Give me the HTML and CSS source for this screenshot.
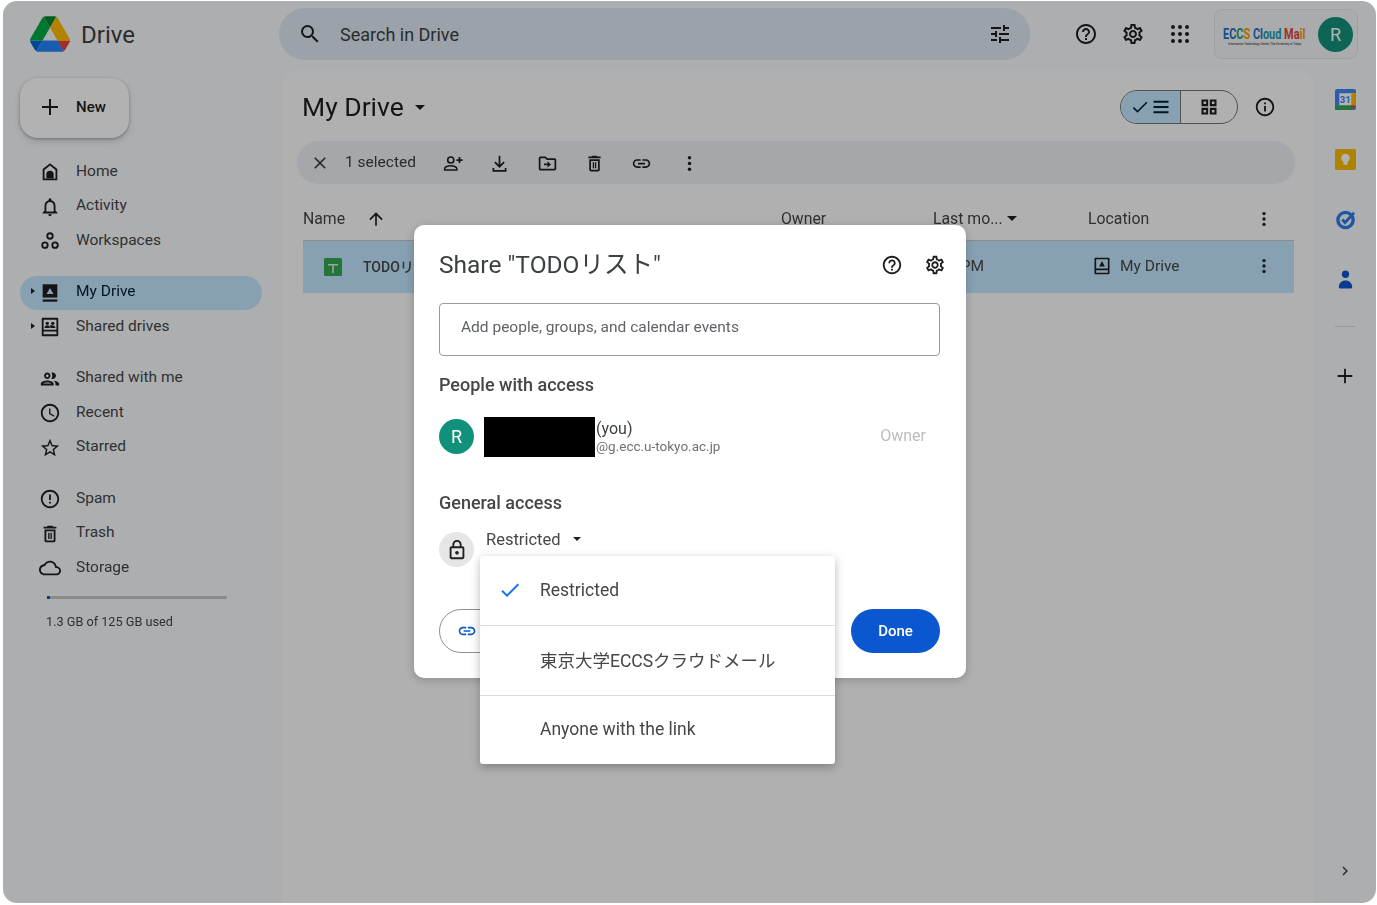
FILE: index.html
```html
<!DOCTYPE html>
<html lang="en">
<head>
  <meta charset="UTF-8" />
  <title>My Drive - Google Drive</title>
  <link rel="stylesheet" href="styles.css">
</head>
<body>
  <svg class="sprite" xmlns="http://www.w3.org/2000/svg">
    <symbol id="i-search" viewBox="0 0 24 24"><path d="M15.5 14h-.79l-.28-.27A6.471 6.471 0 0 0 16 9.5 6.5 6.5 0 1 0 9.5 16c1.61 0 3.09-.59 4.23-1.57l.27.28v.79l5 4.99L20.49 19l-4.99-5zm-6 0C7.01 14 5 11.99 5 9.5S7.01 5 9.5 5 14 7.01 14 9.5 11.99 14 9.5 14z"/></symbol>
    <symbol id="i-tune" viewBox="0 0 24 24"><path d="M3 17v2h6v-2H3zM3 5v2h10V5H3zm10 16v-2h8v-2h-8v-2h-2v6h2zM7 9v2H3v2h4v2h2V9H7zm14 4v-2H11v2h10zm-6-4h2V7h4V5h-4V3h-2v6z"/></symbol>
    <symbol id="i-help" viewBox="0 0 24 24"><path d="M11 18h2v-2h-2v2zm1-16C6.48 2 2 6.48 2 12s4.48 10 10 10 10-4.48 10-10S17.52 2 12 2zm0 18c-4.41 0-8-3.59-8-8s3.59-8 8-8 8 3.59 8 8-3.59 8-8 8zm0-14c-2.21 0-4 1.79-4 4h2c0-1.1.9-2 2-2s2 .9 2 2c0 2-3 1.75-3 5h2c0-2.25 3-2.5 3-5 0-2.21-1.79-4-4-4z"/></symbol>
    <symbol id="i-settings" viewBox="0 0 24 24"><path d="M19.43 12.98c.04-.32.07-.64.07-.98 0-.34-.03-.66-.07-.98l2.11-1.65c.19-.15.24-.42.12-.64l-2-3.46c-.09-.16-.26-.25-.44-.25-.06 0-.12.01-.17.03l-2.49 1c-.52-.4-1.08-.73-1.69-.98l-.38-2.65C14.46 2.18 14.25 2 14 2h-4c-.25 0-.46.18-.49.42l-.38 2.65c-.61.25-1.17.59-1.69.98l-2.49-1c-.06-.02-.12-.03-.18-.03-.17 0-.34.09-.43.25l-2 3.46c-.13.22-.07.49.12.64l2.11 1.65c-.04.32-.07.65-.07.98 0 .33.03.66.07.98l-2.11 1.65c-.19.15-.24.42-.12.64l2 3.46c.09.16.26.25.44.25.06 0 .12-.01.17-.03l2.49-1c.52.4 1.08.73 1.69.98l.38 2.65c.03.24.24.42.49.42h4c.25 0 .46-.18.49-.42l.38-2.65c.61-.25 1.17-.59 1.69-.98l2.49 1c.06.02.12.03.18.03.17 0 .34-.09.43-.25l2-3.46c.12-.22.07-.49-.12-.64l-2.11-1.65zm-1.98-1.71c.04.31.05.52.05.73 0 .21-.02.43-.05.73l-.14 1.13.89.7 1.08.84-.7 1.21-1.27-.51-1.04-.42-.9.68c-.43.32-.84.56-1.25.73l-1.06.43-.16 1.13-.2 1.35h-1.4l-.19-1.35-.16-1.13-1.06-.43c-.43-.18-.83-.41-1.23-.71l-.91-.7-1.06.43-1.27.51-.7-1.21 1.08-.84.89-.7-.14-1.13c-.03-.31-.05-.54-.05-.74s.02-.43.05-.73l.14-1.13-.89-.7-1.08-.84.7-1.21 1.27.51 1.04.42.9-.68c.43-.32.84-.56 1.25-.73l1.06-.43.16-1.13.2-1.35h1.39l.19 1.35.16 1.13 1.06.43c.43.18.83.41 1.23.71l.91.7 1.06-.43 1.27-.51.7 1.21-1.07.85-.89.7.14 1.13zM12 8c-2.21 0-4 1.79-4 4s1.79 4 4 4 4-1.79 4-4-1.79-4-4-4zm0 6c-1.1 0-2-.9-2-2s.9-2 2-2 2 .9 2 2-.9 2-2 2z"/></symbol>
    <symbol id="i-apps" viewBox="0 0 24 24"><circle cx="5" cy="5" r="2"/><circle cx="12" cy="5" r="2"/><circle cx="19" cy="5" r="2"/><circle cx="5" cy="12" r="2"/><circle cx="12" cy="12" r="2"/><circle cx="19" cy="12" r="2"/><circle cx="5" cy="19" r="2"/><circle cx="12" cy="19" r="2"/><circle cx="19" cy="19" r="2"/></symbol>
    <symbol id="i-plus" viewBox="0 0 24 24"><path d="M20 13h-7v7h-2v-7H4v-2h7V4h2v7h7z"/></symbol>
    <symbol id="i-home" viewBox="0 0 24 24"><path d="M12 2.5 4 8.7V21h16V8.7zM18 19H6V9.7l6-4.7 6 4.7z"/><path d="M8 19v-4.500a4 4 0 0 1 8 0V19z"/></symbol>
    <symbol id="i-bell" viewBox="0 0 24 24"><path d="M12 22c1.100 0 2-.9 2-2h-4c0 1.100.9 2 2 2zm6-6v-5c0-3.070-1.630-5.640-4.500-6.320V4c0-.83-.67-1.500-1.500-1.500s-1.500.67-1.500 1.500v.68C7.640 5.360 6 7.920 6 11v5l-2 2v1h16v-1l-2-2zm-2 1H8v-6c0-2.480 1.510-4.500 4-4.500s4 2.020 4 4.500v6z"/></symbol>
    <symbol id="i-workspaces" viewBox="0 0 24 24"><g fill="none" stroke="currentColor" stroke-width="2"><circle cx="12" cy="6.500" r="3"/><circle cx="6.500" cy="16.500" r="3"/><circle cx="17.500" cy="16.500" r="3"/></g></symbol>
    <symbol id="i-mydrive" viewBox="0 0 24 24"><path d="M4 2.500h16v14.500H4z"/><path d="M4 19h16v2.500H4z"/><path fill="#c2e7ff" d="M12 6.500 15.800 13H8.200z"/></symbol>
    <symbol id="i-drive-outline" viewBox="0 0 24 24"><path d="M4 2h16a1 1 0 0 1 1 1v18a1 1 0 0 1-1 1H4a1 1 0 0 1-1-1V3a1 1 0 0 1 1-1zm1 2v11h14V4zm0 13v3h14v-3z"/><path d="M12 6 15.500 12.500h-7z"/></symbol>
    <symbol id="i-shared" viewBox="0 0 24 24"><path d="M4 2h16a1 1 0 0 1 1 1v18a1 1 0 0 1-1 1H4a1 1 0 0 1-1-1V3a1 1 0 0 1 1-1zm1 2v11h14V4zm0 13v3h14v-3z"/><circle cx="9" cy="8" r="1.800"/><circle cx="15" cy="8" r="1.800"/><path d="M6 13c0-2 1.500-3 3-3s3 1 3 3zm6.500 0c0-1-.3-2-1-2.600.9-.5 1.800-.4 2.500-.4 1.800 0 4 1 4 3z"/></symbol>
    <symbol id="i-people" viewBox="0 0 24 24"><path d="M9 13.750c-2.340 0-7 1.170-7 3.500V19h14v-1.750c0-2.330-4.660-3.500-7-3.500zM4.340 17c.84-.58 2.870-1.250 4.660-1.250s3.820.67 4.660 1.250H4.340zM9 12c1.930 0 3.500-1.570 3.500-3.500S10.930 5 9 5 5.500 6.570 5.500 8.500 7.070 12 9 12zm0-5c.83 0 1.500.67 1.500 1.500S9.830 10 9 10s-1.500-.67-1.500-1.500S8.170 7 9 7zm7.040 6.810c1.160.84 1.960 1.960 1.960 3.440V19h4v-1.750c0-2.020-3.500-3.170-5.960-3.440zM15 12c1.930 0 3.500-1.570 3.500-3.500S16.930 5 15 5c-.54 0-1.040.13-1.500.35.630.89 1 1.980 1 3.150s-.37 2.260-1 3.150c.46.220.96.350 1.500.350z"/></symbol>
    <symbol id="i-clock" viewBox="0 0 24 24"><path d="M11.990 2C6.470 2 2 6.480 2 12s4.470 10 9.990 10C17.520 22 22 17.520 22 12S17.520 2 11.990 2zM12 20c-4.420 0-8-3.580-8-8s3.580-8 8-8 8 3.580 8 8-3.580 8-8 8zm.5-13H11v6l5.250 3.150.75-1.230-4.500-2.670z"/></symbol>
    <symbol id="i-star" viewBox="0 0 24 24"><path d="M22 9.240l-7.190-.62L12 2 9.190 8.630 2 9.240l5.460 4.730L5.820 21 12 17.270 18.180 21l-1.630-7.030L22 9.240zM12 15.400l-3.760 2.270 1-4.280-3.320-2.880 4.380-.38L12 6.100l1.710 4.040 4.380.38-3.320 2.880 1 4.280L12 15.400z"/></symbol>
    <symbol id="i-spam" viewBox="0 0 24 24"><path d="M11 15h2v2h-2zm0-8h2v6h-2zm.99-5C6.470 2 2 6.480 2 12s4.470 10 9.990 10C17.520 22 22 17.520 22 12S17.520 2 11.990 2zM12 20c-4.420 0-8-3.580-8-8s3.580-8 8-8 8 3.580 8 8-3.580 8-8 8z"/></symbol>
    <symbol id="i-trash" viewBox="0 0 24 24"><path d="M6 19c0 1.100.9 2 2 2h8c1.100 0 2-.9 2-2V7H6v12zM8 9h8v10H8V9zm7.500-5l-1-1h-5l-1 1H5v2h14V4z"/><path d="M10 10.500h1.500v7H10zM12.500 10.500H14v7h-1.500z"/></symbol>
    <symbol id="i-cloud" viewBox="0 0 24 24"><path d="M19.350 10.040C18.670 6.590 15.640 4 12 4 9.110 4 6.600 5.640 5.350 8.040 2.340 8.360 0 10.910 0 14c0 3.310 2.690 6 6 6h13c2.760 0 5-2.240 5-5 0-2.640-2.050-4.780-4.650-4.960zM19 18H6c-2.210 0-4-1.790-4-4 0-2.050 1.530-3.760 3.560-3.970l1.070-.11.500-.95C8.080 7.140 9.940 6 12 6c2.620 0 4.880 1.860 5.390 4.430l.3 1.500 1.530.11c1.560.1 2.780 1.410 2.780 2.960 0 1.650-1.350 3-3 3z"/></symbol>
    <symbol id="i-check" viewBox="0 0 24 24"><path d="M9 16.170 4.830 12l-1.420 1.410L9 19 21 7l-1.410-1.410z"/></symbol>
    <symbol id="i-list" viewBox="0 0 24 24"><path d="M3 4.500h18v2.500H3zM3 10.750h18v2.500H3zM3 17h18v2.500H3z"/></symbol>
    <symbol id="i-grid" viewBox="0 0 24 24"><path d="M3 3v8h8V3H3zm5.500 5.500h-3v-3h3v3zM3 13v8h8v-8H3zm5.500 5.500h-3v-3h3v3zM13 3v8h8V3h-8zm5.500 5.500h-3v-3h3v3zM13 13v8h8v-8h-8zm5.500 5.500h-3v-3h3v3z"/></symbol>
    <symbol id="i-info" viewBox="0 0 24 24"><path d="M11 7h2v2h-2zm0 4h2v6h-2zm1-9C6.480 2 2 6.480 2 12s4.480 10 10 10 10-4.480 10-10S17.520 2 12 2zm0 18c-4.410 0-8-3.590-8-8s3.590-8 8-8 8 3.590 8 8-3.590 8-8 8z"/></symbol>
    <symbol id="i-close" viewBox="0 0 24 24"><path d="M19 6.410 17.590 5 12 10.590 6.410 5 5 6.410 10.590 12 5 17.590 6.410 19 12 13.410 17.590 19 19 17.590 13.410 12z"/></symbol>
    <symbol id="i-person-add" viewBox="0 0 24 24"><g fill="none" stroke="currentColor" stroke-width="1.800"><circle cx="10" cy="8" r="3.500"/><path d="M3 19.500v-1.500c0-2.200 4-3.500 7-3.500s7 1.300 7 3.500v1.500z"/></g><path d="M19 7V4.500h2V7h2.500v2H21v2.500h-2V9h-2.500V7z"/></symbol>
    <symbol id="i-download" viewBox="0 0 24 24"><path d="M11 3h2v10.200l3.600-3.600L18 11l-6 6-6-6 1.400-1.400 3.600 3.600z"/><path d="M4 17h2v2.500h12V17h2v4.500H4z"/></symbol>
    <symbol id="i-move" viewBox="0 0 24 24"><path d="M20 6h-8l-2-2H4c-1.100 0-2 .9-2 2v12c0 1.100.9 2 2 2h16c1.100 0 2-.9 2-2V8c0-1.100-.9-2-2-2zm0 12H4V6h5.170l2 2H20v10zm-8-4h-4v-2h4v-2.500l4 3.500-4 3.500z"/></symbol>
    <symbol id="i-link" viewBox="0 0 24 24"><path d="M3.900 12c0-1.710 1.390-3.100 3.100-3.100h4V7H7c-2.760 0-5 2.240-5 5s2.240 5 5 5h4v-1.900H7c-1.710 0-3.100-1.390-3.100-3.100zM8 13h8v-2H8v2zm9-6h-4v1.900h4c1.710 0 3.100 1.390 3.100 3.100s-1.390 3.100-3.100 3.100h-4V17h4c2.760 0 5-2.240 5-5s-2.240-5-5-5z"/></symbol>
    <symbol id="i-more" viewBox="0 0 24 24"><circle cx="12" cy="5.500" r="2"/><circle cx="12" cy="12" r="2"/><circle cx="12" cy="18.500" r="2"/></symbol>
    <symbol id="i-up" viewBox="0 0 24 24"><path d="M4 12l1.410 1.410L11 7.830V20h2V7.830l5.580 5.590L20 12l-8-8-8 8z"/></symbol>
    <symbol id="i-lock" viewBox="0 0 24 24"><path d="M18 8h-1V6c0-2.760-2.240-5-5-5S7 3.240 7 6v2H6c-1.100 0-2 .9-2 2v10c0 1.100.9 2 2 2h12c1.100 0 2-.9 2-2V10c0-1.100-.9-2-2-2zM9 6c0-1.660 1.340-3 3-3s3 1.340 3 3v2H9V6zm9 14H6V10h12v10zm-6-3c1.100 0 2-.9 2-2s-.9-2-2-2-2 .9-2 2 .9 2 2 2z"/></symbol>
    <symbol id="i-chevron" viewBox="0 0 24 24"><path d="M8.590 16.590 13.170 12 8.590 7.410 10 6l6 6-6 6z"/></symbol>
  </svg>

  <div class="window">
    <header class="topbar">
      <div class="brand">
        <svg class="drive-logo" viewBox="0 0 87.300 78">
          <path d="m6.600 66.850 3.850 6.650c.8 1.400 1.950 2.500 3.300 3.300l13.750-23.800h-27.500c0 1.550.4 3.100 1.200 4.500z" fill="#0066da"/>
          <path d="m43.650 25-13.750-23.800c-1.350.8-2.500 1.900-3.300 3.300l-25.400 44a9.060 9.060 0 0 0 -1.200 4.500h27.500z" fill="#00ac47"/>
          <path d="m73.550 76.800c1.350-.8 2.500-1.900 3.300-3.300l1.600-2.750 7.650-13.250c.8-1.400 1.200-2.950 1.200-4.500h-27.502l5.852 11.500z" fill="#ea4335"/>
          <path d="m43.650 25 13.750-23.800c-1.350-.8-2.900-1.200-4.500-1.200h-18.500c-1.600 0-3.150.45-4.500 1.200z" fill="#00832d"/>
          <path d="m59.800 53h-32.300l-13.750 23.800c1.350.8 2.900 1.200 4.500 1.200h50.800c1.600 0 3.150-.45 4.500-1.200z" fill="#2684fc"/>
          <path d="m73.400 26.500-12.700-22c-.8-1.400-1.950-2.500-3.300-3.300l-13.750 23.800 16.150 28h27.450c0-1.550-.4-3.100-1.200-4.500z" fill="#ffba00"/>
        </svg>
        <span class="brand-name">Drive</span>
      </div>
      <div class="search">
        <svg class="ic search-ic"><use href="#i-search"/></svg>
        <span class="search-text">Search in Drive</span>
        <svg class="ic tune-ic"><use href="#i-tune"/></svg>
      </div>
      <div class="top-actions">
        <svg class="ic"><use href="#i-help"/></svg>
        <svg class="ic"><use href="#i-settings"/></svg>
        <svg class="ic"><use href="#i-apps"/></svg>
      </div>
      <div class="account">
        <div class="org">
          <div class="org-name"><span class="c-blue">EC</span><span class="c-green">C</span><span class="c-orange">S</span> <span class="c-blue">Cl</span><span class="c-teal">oud</span> <span class="c-red">Ma</span><span class="c-orange">il</span></div>
          <div class="org-sub">Information Technology Center, The University of Tokyo</div>
        </div>
        <div class="avatar">R</div>
      </div>
    </header>

    <div class="content">
      <aside class="sidebar">
        <button class="new-btn"><svg class="ic"><use href="#i-plus"/></svg>New</button>
        <nav class="nav">
          <div class="nav-group">
            <a class="nav-item"><i class="arrow-slot"></i><svg class="ic"><use href="#i-home"/></svg>Home</a>
            <a class="nav-item"><i class="arrow-slot"></i><svg class="ic"><use href="#i-bell"/></svg>Activity</a>
            <a class="nav-item"><i class="arrow-slot"></i><svg class="ic"><use href="#i-workspaces"/></svg>Workspaces</a>
          </div>
          <div class="nav-group">
            <a class="nav-item active"><i class="arrow-slot has-arrow"></i><svg class="ic"><use href="#i-mydrive"/></svg>My Drive</a>
            <a class="nav-item"><i class="arrow-slot has-arrow"></i><svg class="ic"><use href="#i-shared"/></svg>Shared drives</a>
          </div>
          <div class="nav-group">
            <a class="nav-item"><i class="arrow-slot"></i><svg class="ic"><use href="#i-people"/></svg>Shared with me</a>
            <a class="nav-item"><i class="arrow-slot"></i><svg class="ic"><use href="#i-clock"/></svg>Recent</a>
            <a class="nav-item"><i class="arrow-slot"></i><svg class="ic"><use href="#i-star"/></svg>Starred</a>
          </div>
          <div class="nav-group">
            <a class="nav-item"><i class="arrow-slot"></i><svg class="ic"><use href="#i-spam"/></svg>Spam</a>
            <a class="nav-item"><i class="arrow-slot"></i><svg class="ic"><use href="#i-trash"/></svg>Trash</a>
            <a class="nav-item"><i class="arrow-slot"></i><svg class="ic"><use href="#i-cloud"/></svg>Storage</a>
          </div>
        </nav>
        <div class="storage-bar"><div class="storage-used"></div></div>
        <div class="storage-text">1.3 GB of 125 GB used</div>
      </aside>

      <main class="main">
        <div class="title-row">
          <h1 class="page-title">My Drive</h1>
          <i class="caret caret-title"></i>
          <div class="view-toggle">
            <span class="toggle-part on">
              <svg class="ic"><use href="#i-check"/></svg>
              <svg class="ic"><use href="#i-list"/></svg>
            </span>
            <span class="toggle-part"><svg class="ic"><use href="#i-grid"/></svg></span>
          </div>
          <svg class="ic info-ic"><use href="#i-info"/></svg>
        </div>

        <div class="toolbar">
          <svg class="ic close-ic"><use href="#i-close"/></svg>
          <span class="selected-count">1 selected</span>
          <div class="tool-icons">
            <svg class="ic"><use href="#i-person-add"/></svg>
            <svg class="ic"><use href="#i-download"/></svg>
            <svg class="ic"><use href="#i-move"/></svg>
            <svg class="ic"><use href="#i-trash"/></svg>
            <svg class="ic"><use href="#i-link"/></svg>
            <svg class="ic"><use href="#i-more"/></svg>
          </div>
        </div>

        <div class="file-row file-head">
          <div class="cell-name">Name <svg class="ic up-ic"><use href="#i-up"/></svg></div>
          <div>Owner</div>
          <div class="cell-modified">Last mo... <i class="caret"></i></div>
          <div>Location</div>
          <svg class="ic more-ic"><use href="#i-more"/></svg>
        </div>
        <div class="file-row file-item">
          <div class="cell-file">
            <svg class="sheet-ic" viewBox="0 0 18 18"><rect width="18" height="18" rx="1.500" fill="#34a853"/><path d="M4 6h10v1.600h-4.200V15H8.200V7.600H4z" fill="#d9f0df"/></svg>
            <span class="file-name">TODOリスト</span>
          </div>
          <div>me</div>
          <div class="cell-time">1:15 PM</div>
          <div class="cell-location"><svg class="ic"><use href="#i-drive-outline"/></svg>My Drive</div>
          <svg class="ic more-ic"><use href="#i-more"/></svg>
        </div>
      </main>

      <aside class="rail">
        <svg class="rail-ic" viewBox="0 0 22 22">
          <rect width="22" height="22" rx="2" fill="#4285f4"/>
          <rect x="16" y="4" width="6" height="14" fill="#fbbc04"/>
          <rect y="17" width="18" height="5" fill="#34a853"/>
          <path d="M17 17h5l-5 5z" fill="#ea4335"/>
          <rect x="4.500" y="4.500" width="12.500" height="12.500" fill="#fff"/>
          <text x="10.800" y="15" text-anchor="middle" class="cal-day">31</text>
        </svg>
        <svg class="rail-ic" viewBox="0 0 22 22">
          <rect width="22" height="22" rx="1.500" fill="#fbbc04"/>
          <circle cx="11" cy="9.500" r="4.500" fill="#fff"/>
          <rect x="8.800" y="13" width="4.400" height="3.500" fill="#fff"/>
        </svg>
        <svg class="rail-ic" viewBox="0 0 22 22">
          <circle cx="11" cy="11.500" r="8" fill="none" stroke="#2f7be8" stroke-width="3.500"/>
          <path d="m7.500 11 3 3.200L20 4" fill="none" stroke="#2f7be8" stroke-width="3"/>
        </svg>
        <svg class="rail-ic" viewBox="0 0 22 22">
          <circle cx="11" cy="5.500" r="3.800" fill="#0b57d0"/>
          <path d="M4 19c0-5 4-7 7-7s7 2 7 7c0 1-1 1.500-2 1.500H6c-1 0-2-.5-2-1.500z" fill="#0b57d0"/>
        </svg>
        <div class="rail-divider"></div>
        <svg class="ic rail-plus"><use href="#i-plus"/></svg>
        <svg class="ic rail-chevron"><use href="#i-chevron"/></svg>
      </aside>
    </div>

    <div class="scrim"></div>

    <section class="modal">
      <div class="modal-head">
        <h2 class="modal-title">Share "TODOリスト"</h2>
        <svg class="ic"><use href="#i-help"/></svg>
        <svg class="ic"><use href="#i-settings"/></svg>
      </div>
      <div class="share-input">Add people, groups, and calendar events</div>
      <h3 class="section-label label-people">People with access</h3>
      <div class="person">
        <div class="avatar">R</div>
        <div class="redacted"></div>
        <div class="person-text">
          <div class="person-name">(you)</div>
          <div class="person-mail">@g.ecc.u-tokyo.ac.jp</div>
        </div>
        <span class="person-role">Owner</span>
      </div>
      <h3 class="section-label label-general">General access</h3>
      <div class="access">
        <div class="lock-circle"><svg class="ic"><use href="#i-lock"/></svg></div>
        <div class="access-select">Restricted <i class="caret"></i></div>
      </div>
      <div class="modal-foot">
        <button class="copy-btn"><svg class="ic"><use href="#i-link"/></svg>Copy link</button>
        <button class="done-btn">Done</button>
      </div>

      <ul class="menu">
        <li class="menu-item"><svg class="ic menu-check"><use href="#i-check"/></svg>Restricted</li>
        <li class="menu-item">東京大学ECCSクラウドメール</li>
        <li class="menu-item">Anyone with the link</li>
      </ul>
    </section>
  </div>
</body>
</html>
```

FILE: styles.css
```css
* {
  box-sizing: border-box;
}

body {
  margin: 0;
  background: #fff;
  font-family: Roboto, "Noto Sans CJK JP", sans-serif;
  color: #444746;
  overflow: hidden;
}

.sprite {
  display: none;
}

.ic {
  display: block;
  width: 22px;
  height: 22px;
  fill: currentColor;
  flex: none;
}

/* window */
.window {
  position: relative;
  margin: 1px 1px 2px 3px;
  height: 902px;
  background: #f8fafd;
  border-radius: 14px;
  overflow: hidden;
  filter: blur(0.4px);
}

.scrim {
  position: absolute;
  inset: 0;
  background: rgba(0, 0, 0, 0.3);
}

/* top bar */
.topbar {
  display: flex;
  align-items: center;
  height: 69px;
  padding-bottom: 3px;
}

.brand {
  display: flex;
  align-items: center;
  width: 276px;
  padding-left: 27px;
}

.drive-logo {
  width: 40px;
  height: 36px;
}

.brand-name {
  margin: 1px 0 0 11px;
  font-size: 24px;
  color: #3c4043;
}

.search {
  display: flex;
  align-items: center;
  width: 751px;
  height: 52px;
  padding: 0 18px 0 19px;
  background: #e0e8f2;
  border-radius: 26px;
}

.search-ic {
  width: 24px;
  height: 24px;
  color: #1f1f1f;
}

.search-text {
  margin-left: 18px;
  font-size: 18px;
  color: #3c4043;
}

.tune-ic {
  margin-left: auto;
  width: 24px;
  height: 24px;
  color: #1f1f1f;
}

.top-actions {
  display: flex;
  gap: 23px;
  margin-left: 44px;
  color: #1f1f1f;
}

.top-actions .ic {
  width: 24px;
  height: 24px;
}

.account {
  display: flex;
  align-items: center;
  justify-content: space-between;
  width: 144px;
  height: 50px;
  margin-left: 22px;
  padding: 0 4px 0 8px;
  background: #f4f5f7;
  border: 1px solid #e4e6e9;
  border-radius: 8px;
}

.org {
  width: 86px;
  margin-top: 4px;
  overflow: hidden;
}

.org-name {
  width: 110px;
  font-size: 14px;
  font-weight: 700;
  line-height: 15px;
  white-space: nowrap;
  transform: scaleX(0.78);
  transform-origin: left center;
}

.org-sub {
  margin-left: 5px;
  font-size: 3px;
  line-height: 4px;
  color: #222;
  white-space: nowrap;
  overflow: hidden;
}

.c-blue { color: #1a73c8; }
.c-green { color: #2a9d6a; }
.c-orange { color: #f29900; }
.c-teal { color: #1f9bb5; }
.c-red { color: #e2453c; }

.avatar {
  display: flex;
  align-items: center;
  justify-content: center;
  width: 35px;
  height: 35px;
  background: #12917a;
  border-radius: 50%;
  color: #fff;
  font-size: 18px;
  flex: none;
}

/* layout */
.content {
  display: flex;
  height: 833px;
}

.sidebar {
  width: 279px;
  flex: none;
}

.new-btn {
  display: flex;
  align-items: center;
  gap: 14px;
  width: 109px;
  height: 60px;
  margin: 8px 0 0 17px;
  padding: 0 0 2px 18px;
  background: #fff;
  border: none;
  border-radius: 18px;
  box-shadow: 0 1px 3px rgba(60, 64, 67, 0.4), 0 4px 8px rgba(60, 64, 67, 0.15);
  font: 500 15px Roboto, sans-serif;
  color: #1f1f1f;
}

.new-btn .ic {
  width: 24px;
  height: 24px;
}

.nav {
  margin-top: 15.500px;
}

.nav-group + .nav-group {
  margin-top: 17px;
}

.nav-item {
  display: flex;
  align-items: center;
  width: 242px;
  height: 34.500px;
  margin-left: 17px;
  font-size: 15.500px;
  color: #444746;
}

.nav-item .ic {
  margin: 3px 15px 0 0;
  color: #1f1f1f;
}

.nav-item.active {
  position: relative;
  color: #001d35;
}

.nav-item.active::before {
  content: "";
  position: absolute;
  inset: 2px 0 -1.500px;
  z-index: -1;
  background: #c2e7ff;
  border-radius: 17px;
}

.arrow-slot {
  width: 19px;
  flex: none;
}

.has-arrow::before {
  content: "";
  display: block;
  margin-left: 11px;
  width: 0;
  height: 0;
  border-left: 4px solid #1f1f1f;
  border-top: 3.500px solid transparent;
  border-bottom: 3.500px solid transparent;
}

.storage-bar {
  width: 180px;
  height: 3px;
  margin: 12px 0 0 44px;
  background: #c4c7c5;
  border-radius: 2px;
}

.storage-used {
  width: 3px;
  height: 3px;
  background: #0b57d0;
}

.storage-text {
  margin: 15px 0 0 43px;
  font-size: 12.700px;
  color: #444746;
}

.main {
  width: 1032px;
  flex: none;
  padding: 20px 19px 0 15px;
  background: #fcfcfd;
  border-radius: 16px 16px 0 0;
}

.title-row {
  display: flex;
  align-items: center;
  height: 34px;
  padding: 0 19px 0 5px;
}

.page-title {
  margin: -2px 0 0;
  font-size: 26.500px;
  font-weight: 400;
  color: #1f1f1f;
}

.caret {
  display: inline-block;
  width: 0;
  height: 0;
  border-top: 5px solid #1f1f1f;
  border-left: 5px solid transparent;
  border-right: 5px solid transparent;
}

.caret-title {
  margin-left: 11px;
}

.view-toggle {
  display: flex;
  width: 118px;
  height: 34px;
  margin-left: auto;
  border: 1px solid #747775;
  border-radius: 17px;
  overflow: hidden;
}

.toggle-part {
  display: flex;
  flex: 1;
  align-items: center;
  justify-content: center;
  color: #1f1f1f;
}

.toggle-part .ic {
  width: 20px;
  height: 20px;
}

.toggle-part.on {
  gap: 1px;
  flex: none;
  width: 60px;
  background: #c2e7ff;
  border-right: 1px solid #747775;
  color: #001d35;
}

.info-ic {
  width: 22px;
  height: 22px;
  margin-left: 16px;
  color: #1f1f1f;
}

.toolbar {
  display: flex;
  align-items: center;
  height: 43px;
  margin-top: 17px;
  padding-left: 13px;
  background: #edf0f5;
  border-radius: 22px;
  color: #3c4043;
}

.close-ic {
  width: 20px;
  height: 20px;
}

.selected-count {
  margin: -2px 0 0 15px;
  width: 70px;
  font-size: 15.500px;
  white-space: nowrap;
}

.tool-icons {
  display: grid;
  grid-template-columns: repeat(6, 47.300px);
  justify-items: center;
  margin: 1px 0 0 14px;
  color: #1f1f1f;
}

.tool-icons .ic {
  width: 21px;
  height: 21px;
}

.file-row {
  display: grid;
  grid-template-columns: 478px 152px 155px 1fr 40px;
  align-items: center;
  margin-left: 6px;
  margin-right: 1px;
  padding-right: 10px;
  font-size: 15.500px;
}

.file-head {
  height: 44px;
  margin-top: 13px;
  border-bottom: 1px solid #c7c7c7;
  font-size: 15.800px;
  color: #444746;
}

.cell-name,
.cell-modified {
  display: flex;
  align-items: center;
}

.up-ic {
  width: 20px;
  height: 20px;
  margin-left: 21px;
  color: #1f1f1f;
}

.cell-modified .caret {
  margin-left: 4px;
}

.more-ic {
  width: 20px;
  height: 20px;
  justify-self: center;
  color: #1f1f1f;
}

.file-item {
  height: 52px;
  padding-bottom: 3px;
  background: #c2e7ff;
  color: #444746;
}

.cell-file {
  display: flex;
  align-items: center;
  padding-left: 21px;
  gap: 21px;
}

.cell-time {
  margin-left: -6px;
}

.sheet-ic {
  width: 18px;
  height: 18px;
  margin-top: 3px;
}

.file-name {
  font-size: 14px;
  font-weight: 500;
}

.cell-location {
  display: flex;
  align-items: center;
  gap: 7px;
}

.cell-location .ic {
  width: 20px;
  height: 20px;
  margin-left: 4px;
  margin-right: 1px;
  color: #1f1f1f;
}

.more-ic:last-child {
  margin-top: 1px;
}

/* right rail */
.rail {
  position: relative;
  flex: 1;
  display: flex;
  flex-direction: column;
  align-items: center;
  padding-top: 19px;
}

.rail-ic {
  display: block;
  width: 21px;
  height: 21px;
  margin-bottom: 39px;
}

.cal-day {
  font: 700 10px Roboto, sans-serif;
  fill: #4285f4;
}

.rail-divider {
  width: 20px;
  height: 1px;
  margin-top: -3px;
  background: #d6d8db;
}

.rail-plus {
  margin-top: 38px;
  color: #1f1f1f;
}

.rail-chevron {
  position: absolute;
  left: 22px;
  bottom: 23px;
  width: 18px;
  height: 18px;
  color: #444746;
}

/* share dialog */
.modal {
  position: absolute;
  left: 411px;
  top: 224px;
  width: 552px;
  height: 453px;
  padding: 20px 26px 0 25px;
  background: #fff;
  border-radius: 10px;
  box-shadow: 0 2px 10px rgba(0, 0, 0, 0.2);
}

.modal-head {
  display: flex;
  align-items: center;
  gap: 21px;
  height: 40px;
}

.modal-title {
  margin: 0 auto 0 0;
  font-size: 24.500px;
  line-height: 30px;
  font-weight: 400;
  color: #3c4043;
}

.modal-head .ic {
  color: #1f1f1f;
}

.modal-head .ic:last-child {
  margin-right: -6px;
}

.share-input {
  display: flex;
  align-items: center;
  height: 53px;
  margin-top: 18px;
  padding: 0 0 5px 21px;
  border: 1.500px solid #9a9b9d;
  border-radius: 4px;
  font-size: 15.500px;
  color: #5f6368;
}

.section-label {
  margin: 0;
  font-size: 18px;
  line-height: 24px;
  font-weight: 500;
  color: #444746;
}

.label-people {
  margin-top: 17px;
}

.label-general {
  margin-top: 34px;
}

.person {
  display: flex;
  align-items: center;
  height: 40px;
  margin-top: 20px;
}

.person .avatar {
  margin-top: -2px;
}

.redacted {
  width: 111px;
  height: 40px;
  margin: 0 1px 0 10px;
  background: #000;
}

.person-text {
  margin-top: -1px;
}

.person-name {
  font-size: 16px;
  line-height: 18px;
  color: #3c4043;
}

.person-mail {
  font-size: 13.500px;
  line-height: 16px;
  color: #6f7276;
}

.person-role {
  margin: -3px 0 0 auto;
  padding-right: 14px;
  font-size: 16px;
  color: #bdbdbd;
}

.access {
  display: flex;
  margin-top: 17px;
}

.lock-circle {
  display: flex;
  align-items: center;
  justify-content: center;
  width: 35px;
  height: 35px;
  background: #e6e6e6;
  border-radius: 50%;
  color: #1f1f1f;
}

.access-select {
  display: flex;
  align-items: center;
  height: 14px;
  margin-left: 12px;
  font-size: 16.500px;
  color: #444746;
}

.access-select .caret {
  margin-left: 12px;
  border-top-width: 4px;
  border-left-width: 4px;
  border-right-width: 4px;
}

.modal-foot {
  display: flex;
  justify-content: space-between;
  margin-top: 42px;
}

.copy-btn,
.done-btn {
  height: 44px;
  border-radius: 22px;
  font: 500 15px Roboto, sans-serif;
}

.copy-btn {
  display: flex;
  align-items: center;
  gap: 8px;
  padding: 0 24px 0 17px;
  background: #fff;
  border: 1px solid #8e918f;
  color: #0b57d0;
}

.copy-btn .ic {
  width: 20px;
  height: 20px;
}

.done-btn {
  width: 89px;
  background: #0b57d0;
  border: none;
  color: #fff;
}

/* access dropdown */
.menu {
  position: absolute;
  left: 66px;
  top: 331px;
  width: 355px;
  margin: 0;
  padding: 0;
  list-style: none;
  background: #fff;
  border-radius: 3px;
  box-shadow: 0 3px 10px rgba(0, 0, 0, 0.28);
}

.menu-item {
  position: relative;
  display: flex;
  align-items: center;
  height: 69.400px;
  padding: 0 0 2px 60px;
  font-size: 17.500px;
  color: #444746;
}

.menu-item + .menu-item {
  border-top: 1px solid #dadce0;
}

.menu-check {
  position: absolute;
  left: 18px;
  width: 24px;
  height: 24px;
  color: #1a73e8;
}
```
